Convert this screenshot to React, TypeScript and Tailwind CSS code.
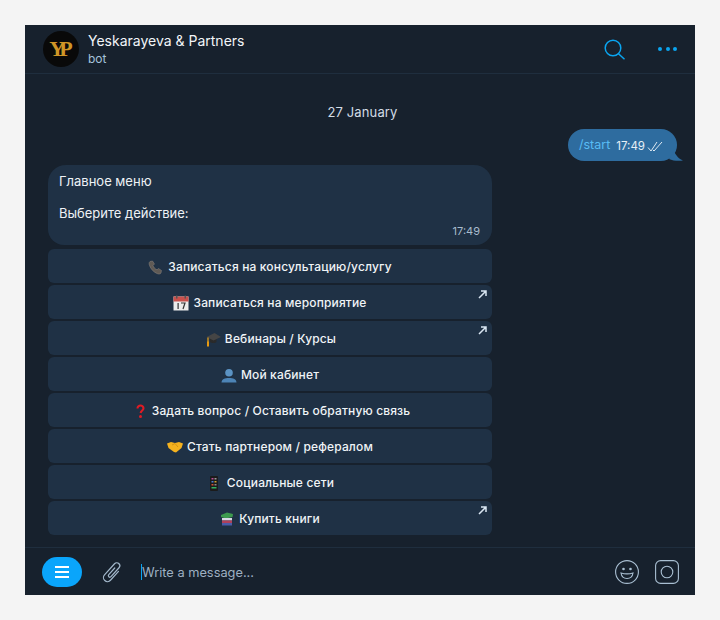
import React from "react";

const font = { fontFamily: "Inter, 'Noto Sans', sans-serif" };

const Phone = () => (
  <svg width="15" height="15" viewBox="0 0 15 15"><path d="M2 1.500 4.500 1l2 3-1.500 1.500c.5 1.800 2.200 3.600 4 4.300L10.500 8.500l3 2-.5 2.500c-.5 1-2 1.300-3.500.7C6 12.500 2.600 9 1.400 5.200.9 3.700 1 2.200 2 1.500Z" fill="#5f5a55" stroke="#8a8580" strokeWidth=".5"/></svg>
);
const Calendar = () => (
  <svg width="16" height="16" viewBox="0 0 16 16"><rect x=".5" y="1.500" width="15" height="14" fill="#ececec"/><rect x=".5" y="1.500" width="15" height="5" fill="#c9504c"/><rect x="3" y=".5" width="1.500" height="3" fill="#555"/><rect x="11.500" y=".5" width="1.500" height="3" fill="#555"/><rect x="4.500" y="8" width="1.200" height="6" fill="#333"/><path d="M8 8h4l-2 6" fill="none" stroke="#333" strokeWidth="1.200"/></svg>
);
const Cap = () => (
  <svg className="ml-[2px]" width="15" height="16" viewBox="0 0 15 16"><path d="M4 7.500v3.500c1.500 1.300 5 1.300 6.500 0V7.500Z" fill="#2a2a2a"/><path d="M8.500 2 15 6 7.500 9.500.5 6Z" fill="#454545"/><path d="M2 6.500v5" stroke="#e0a020" strokeWidth="1.300"/><rect x="1" y="10.500" width="2" height="5" fill="#e89a10"/></svg>
);
const Bust = () => (
  <svg width="16" height="15" viewBox="0 0 16 15"><circle cx="8" cy="4.800" r="3.800" fill="#5b93c4"/><path d="M.5 14.500c.4-3.500 3-4.500 7.500-4.500s7.100 1 7.500 4.500Z" fill="#4d84b6"/></svg>
);
const Question = () => (
  <svg className="ml-[6px]" width="9" height="15" viewBox="0 0 9 15"><path d="M1.500 4.500C1.500 2.500 3 1.500 4.500 1.500S7.500 2.700 7.500 4.300C7.500 6.500 5 6.500 4.600 9" fill="none" stroke="#e01b24" strokeWidth="2.100"/><circle cx="4.500" cy="12.500" r="1.500" fill="#e01b24"/></svg>
);
const Handshake = () => (
  <svg width="16" height="12" viewBox="0 0 16 12"><path d="M0 2.500 4 1l4 1 4-1 4 1.500-1.500 4.500L9 11.500 7 11 1.500 7Z" fill="#f5b21e"/><path d="M5 4 8 2.500 11 6" fill="none" stroke="#c98a10" strokeWidth=".8"/></svg>
);
const Mobile = () => (
  <svg className="ml-[4px]" width="8" height="15" viewBox="0 0 8 15"><rect width="8" height="15" rx="1" fill="#1b1b1b"/><rect x="1.500" y="2" width="2" height="1.500" fill="#c04a9a"/><rect x="4.500" y="2" width="2" height="1.500" fill="#999"/><rect x="1.500" y="5" width="2" height="1.500" fill="#4a7fd0"/><rect x="4.500" y="5" width="2" height="1.500" fill="#d0a030"/><rect x="1.500" y="8" width="2" height="1.500" fill="#d05030"/><rect x="4.500" y="8" width="2" height="1.500" fill="#888"/><rect x="1.500" y="11" width="5" height="1.500" fill="#30b060"/></svg>
);
const Books = () => (
  <svg width="14" height="14" viewBox="0 0 14 14"><path d="M1 3 7 .5 13 2 12.500 5 6 6.500 1 5Z" fill="#3d9a4e"/><rect x="2" y="6" width="10" height="2.500" fill="#d8d8e4"/><rect x="2" y="8.500" width="10" height="2.500" fill="#b0405a"/><rect x="2" y="11" width="10" height="2.500" fill="#4a5ca8"/></svg>
);
const Corner = () => (
  <svg className="absolute top-[5px] right-[5px]" width="9" height="9" viewBox="0 0 9 9" fill="none" stroke="#d9e6f2" strokeWidth="1.500"><path d="M1 8 8 1M3 1h5v5"/></svg>
);

const buttons: [React.ReactNode, string, boolean, string][] = [
  [<Phone />, "Записаться на консультацию/услугу", false, "gap-[5px]"],
  [<Calendar />, "Записаться на мероприятие", true, "gap-[4px]"],
  [<Cap />, "Вебинары / Курсы", true, "gap-[4px]"],
  [<Bust />, "Мой кабинет", false, "gap-[4px]"],
  [<Question />, "Задать вопрос / Оставить обратную связь", false, "gap-[7px]"],
  [<Handshake />, "Стать партнером / рефералом", false, "gap-[4px]"],
  [<Mobile />, "Социальные сети", false, "gap-[9px]"],
  [<Books />, "Купить книги", true, "gap-[5px]"],
];

export default function App() {
  return (
    <div style={font} className="w-[720px] h-[620px] bg-[#f4f4f4] pt-[25px] pl-[25px]">
      <div className="w-[670px] h-[570px] bg-[#17212d] flex flex-col">
        <header className="h-[49px] shrink-0 border-b border-[#1f2e3e] flex items-center pl-[18px] pr-[18px]">
          <div className="w-9 h-9 rounded-full bg-[#090909] flex items-center justify-center mr-[9px] -mt-[1px]">
            <span className="text-[#cf9526] text-[22px] leading-none font-bold tracking-[-6px] pr-[6px]" style={{ fontFamily: "'Liberation Serif', serif" }}>YP</span>
          </div>
          <div className="flex flex-col flex-1 mt-[1px]">
            <span className="text-[14px] leading-[18px] text-[#f2f5f8]">Yeskarayeva &amp; Partners</span>
            <span className="text-[12px] leading-[18px] text-[#a5c2dc]">bot</span>
          </div>
          <svg className="mr-[32px]" width="22" height="21" viewBox="0 0 22 21" fill="none" stroke="#0aa5f0" strokeWidth="1.500"><circle cx="9" cy="9" r="7.800"/><path d="m14.500 14.700 6 5.500"/></svg>
          <div className="flex gap-[3.500px]">
            <span className="w-1 h-1 rounded-full bg-[#0aa5f0]" />
            <span className="w-1 h-1 rounded-full bg-[#0aa5f0]" />
            <span className="w-1 h-1 rounded-full bg-[#0aa5f0]" />
          </div>
        </header>

        <main className="flex-1 flex flex-col px-[23px] min-h-0">
          <div className="text-center text-[13px] tracking-[0.01em] leading-[18px] text-[#d3dde6] pt-[29px] pl-[5px]">27 January</div>
          <div className="flex justify-end mt-[8px] -mr-[5px]">
            <div className="relative h-8 w-[109px] pl-[11px] flex items-center rounded-[16px] bg-[#2e6c9f]">
              <span className="text-[12.500px] mt-[1px] text-[#58bcf5]">/start</span>
              <span className="text-[11.500px] text-[#e6eff6] ml-[6px] mt-[3px]">17:49</span>
              <svg className="ml-[2px] mt-[3px]" width="16" height="11" viewBox="0 0 16 11" fill="none" stroke="#dfeaf3" strokeWidth="1"><path d="m1 6.500 3 3.500L10 1M6 9l1 1 8-9"/></svg>
              <svg className="absolute -right-[6px] bottom-0" width="14" height="10" viewBox="0 0 14 10"><path d="M5 0c1.500 4 5 8 9 9.500C10 10 4 10 0 8Z" fill="#2e6c9f"/></svg>
            </div>
          </div>
          <div className="w-[444px] mt-1 flex flex-col gap-[2px]">
            <div className="relative h-20 rounded-[18px] rounded-b-[16px] bg-[#1f3145] px-[11px] pt-[8px] mb-[2px] text-[13px] leading-4 text-[#eef2f6]">
              <div>Главное меню</div>
              <div className="mt-4">Выберите действие:</div>
              <span className="absolute right-[12px] bottom-[7px] text-[11px] leading-[14px] text-[#a8bccd]">17:49</span>
            </div>
            {buttons.map(([icon, label, arrow, gap]) => (
              <div key={label} className={`relative h-[34px] pt-[2px] rounded-[6px] bg-[#1f3145] flex items-center justify-center ${gap} text-[12px] font-medium tracking-[0.15px] text-[#f0f4f7]`}>
                {icon}
                <span>{label}</span>
                {arrow && <Corner />}
              </div>
            ))}
          </div>
        </main>

        <footer className="h-[48px] shrink-0 border-t border-[#1f2e3e] flex items-center pl-[17px] pr-[16px]">
          <div className="w-10 h-[30px] rounded-[15px] bg-[#0aa5fb] flex flex-col items-center justify-center gap-[3px]">
            <span className="w-[14px] h-[2px] bg-white" />
            <span className="w-[14px] h-[2px] bg-white" />
            <span className="w-[14px] h-[2px] bg-white" />
          </div>
          <svg className="ml-[19px]" width="23" height="24" viewBox="0 0 23 24" fill="none" stroke="#a3b8cb" strokeWidth="1.200" strokeLinecap="round"><path transform="rotate(42 11.500 12)" d="M15.500 7.500V19.500a4 4 0 0 1-8 0V4.500a3 3 0 0 1 6 0V16.500a1.500 1.500 0 0 1-3 0V7.500" /></svg>
          <div className="ml-[17px] flex-1 flex items-center h-[18px] relative">
            <span className="w-px h-[16px] bg-[#0aa5f0]" />
            <span className="text-[12.800px] mt-[2px] text-[#9eb0c2]">Write a message...</span>
          </div>
          <svg width="24" height="24" viewBox="0 0 24 24" fill="none" stroke="#a9bfd2" strokeWidth="1.100"><circle cx="12" cy="12" r="11.400"/><circle cx="8.500" cy="9" r="1.300" fill="#a9bfd2" stroke="none"/><circle cx="15.500" cy="9" r="1.300" fill="#a9bfd2" stroke="none"/><path d="M6 13c3.500 1 8.500 1 12 0-.5 3.500-3 5.500-6 5.500S6.500 16.500 6 13Z"/></svg>
          <svg className="ml-[16px]" width="24" height="24" viewBox="0 0 24 24" fill="none" stroke="#a9bfd2" strokeWidth="1.100"><rect x=".6" y=".6" width="22.800" height="22.800" rx="5"/><circle cx="12" cy="12" r="5.800"/></svg>
        </footer>
      </div>
    </div>
  );
}
